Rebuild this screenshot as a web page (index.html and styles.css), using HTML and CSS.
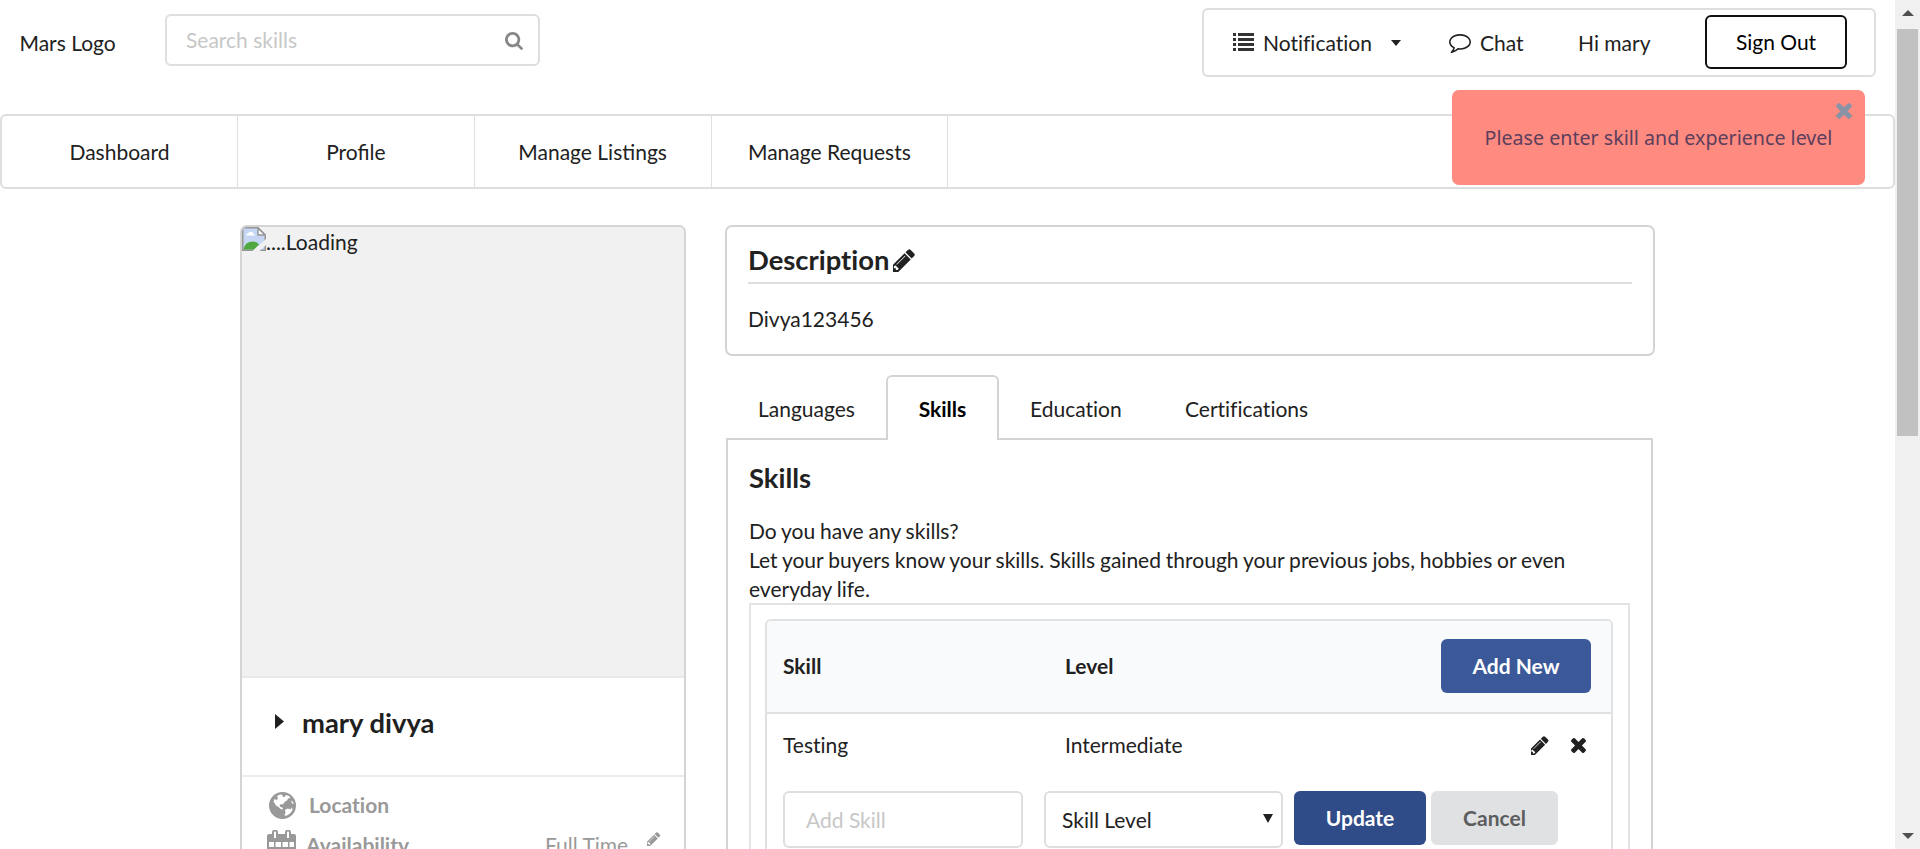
FILE: index.html
```
<!DOCTYPE html>
<html lang="en">
<head>
<meta charset="utf-8">
<title>Profile</title>
<link rel="stylesheet" href="styles.css">
</head>
<body>
<svg class="defs" aria-hidden="true">
  <symbol id="pencil" viewBox="256 128 1408 1536"><path d="M491 1536l91-91-235-235-91 91v107h128v128h107zm523-928q0-22-22-22-10 0-17 7l-542 542q-7 7-7 17 0 22 22 22 10 0 17-7l542-542q7-7 7-17zm-54-192l416 416-832 832h-416v-416zm683 96q0 53-37 90l-166 166-416-416 166-165q36-38 90-38 53 0 91 38l235 234q37 39 37 91z"/></symbol>
  <symbol id="times" viewBox="302 366 1188 1188"><path d="M1490 1322q0 40-28 68l-136 136q-28 28-68 28t-68-28l-294-294-294 294q-28 28-68 28t-68-28l-136-136q-28-28-28-68t28-68l294-294-294-294q-28-28-28-68t28-68l136-136q28-28 68-28t68 28l294 294 294-294q28-28 68-28t68 28l136 136q28 28 28 68t-28 68l-294 294 294 294q28 28 28 68z"/></symbol>
</svg>
<div class="window">
<div class="page">
  <header class="top">
    <span class="logo">Mars Logo</span>
    <div class="search"><span>Search skills</span>
      <svg viewBox="64 128 1664 1664"><path d="M1216 832q0-185-131.5-316.5t-316.5-131.5-316.5 131.5-131.5 316.5 131.5 316.5 316.5 131.5 316.5-131.5 131.5-316.5zm512 832q0 52-38 90t-90 38q-54 0-90-38l-343-342q-179 124-399 124-143 0-273.5-55.5t-225-150-150-225-55.5-273.5 55.5-273.5 150-225 225-150 273.5-55.5 273.5 55.5 225 150 150 225 55.5 273.5q0 220-124 399l343 343q37 37 37 90z"/></svg>
    </div>
    <div class="account">
      <svg class="i-list" viewBox="0 0 21 18"><path d="M0 0h3v3H0zM5 0h16v3H5zM0 5h3v3H0zM5 5h16v3H5zM0 10h3v3H0zM5 10h16v3H5zM0 15h3v3H0zM5 15h16v3H5z"/></svg>
      <span class="notif">Notification</span>
      <svg class="i-caret" viewBox="0 0 10 6"><path d="M0 0h10L5 6z"/></svg>
      <svg class="i-chat" viewBox="0 256 1792 1536"><path d="M896 384q-204 0-381.5 69.5t-282 187.5-104.5 255q0 112 71.5 213.5t201.5 175.5l87 50-27 96q-24 91-70 172 152-63 275-171l43-38 57 6q69 8 130 8 204 0 381.5-69.5t282-187.5 104.5-255-104.5-255-282-187.5-381.5-69.5zm896 512q0 174-120 321.500t-326 233-450 85.500q-70 0-145-8-198 175-460 242-49 14-114 22h-5q-15 0-27-10.500t-16-27.500v-1q-3-4-.5-12t2-10 4.500-9.500l6-9 7-8.500 8-9q7-8 31-34.500t34.500-38 31-39.500 32.500-51 27-59 26-76q-157-89-247.500-220t-90.500-281q0-174 120-321.500t326-233 450-85.500 450 85.500 326 233 120 321.500z"/></svg>
      <span class="chat">Chat</span>
      <span class="hi">Hi mary</span>
      <button class="signout">Sign Out</button>
    </div>
  </header>
  <nav class="menu"><a>Dashboard</a><a>Profile</a><a>Manage Listings</a><a>Manage Requests</a></nav>
  <main class="columns">
    <aside class="card">
      <div class="photo">
        <svg viewBox="0 0 24 24"><path d="M.75.75H16L23.25 8v15.25H.75z" fill="#c6d7f5" stroke="#969696" stroke-width="1.5"/><path d="M4 8.500q0-2 2.200-2 1-2.500 3.300-1.500 2 0 2 2 1.500.300 1.500 1.500z" fill="#fff"/><path d="M1.500 22.500q1.500-8 9.500-8 4 0 6 3l-5 5z" fill="#4fa83d"/><path d="M10.500 24L24 12v6l-6.500 6z" fill="#f1f1f1"/><path d="M16 1v7h7z" fill="#fff" stroke="#969696" stroke-width="1.500"/></svg><span>....Loading</span>
      </div>
      <div class="name"><svg viewBox="0 0 9 15"><path d="M0 0l9 7.500L0 15z"/></svg><h2>mary divya</h2></div>
      <div class="facts">
        <div class="fact loc">
          <svg viewBox="0 0 27 27"><circle cx="13.500" cy="13.500" r="13.500"/><path fill="#fff" d="M8 4l3-1.500 3 .5-1 1.500 2.500.5L17 3l3 1 1.500 2-2.500.5-1 2-2.500 1.500-1.500 2.500-2-.5-1.500 1.500 1 1.500 2 .5.5 2-2-.3-2.500-2.200-2.500-1.500L4.500 9.500 5.500 7l2 1 1.500-1.500zM16 18l2.500-1.500 3 .8 1.500-2 .5 3-2.500 3.200-4 2.500-1.500-1 1-2zM22 8.500l2 1.200.8 2.300-1.800-.8z"/></svg>
          <b>Location</b>
        </div>
        <div class="fact avail">
          <svg viewBox="0 0 29 32"><path fill-rule="evenodd" d="M2 4h3V2.500a3 3 0 0 1 6 0V4h7V2.500a3 3 0 0 1 6 0V4h3q2 0 2 2v24q0 2-2 2H2q-2 0-2-2V6q0-2 2-2zM7 2.500V8h2V2.500q0-1-1-1t-1 1zm13 0V8h2V2.500q0-1-1-1t-1 1zM2 12v5h5v-5zm6.500 0v5H14v-5zm7 0v5h5.500v-5zm7 0v5H27v-5z"/></svg>
          <b>Availability</b><span class="value">Full Time</span><svg class="edit"><use href="#pencil"/></svg>
        </div>
      </div>
    </aside>
    <section class="main">
      <div class="desc">
        <h3>Description<svg><use href="#pencil"/></svg></h3>
        <p>Divya123456</p>
      </div>
      <div class="tabs"><a class="t1">Languages</a><a class="active">Skills</a><a class="t3">Education</a><a class="t4">Certifications</a></div>
      <div class="panel">
        <h3>Skills</h3>
        <p>Do you have any skills?<br>Let your buyers know your skills. Skills gained through your previous jobs, hobbies or even<br>everyday life.</p>
        <div class="frame">
          <div class="table">
            <div class="row head"><b>Skill</b><b>Level</b><button class="btn add">Add New</button></div>
            <div class="row"><span>Testing</span><span>Intermediate</span><span class="acts"><svg class="p"><use href="#pencil"/></svg><svg class="x"><use href="#times"/></svg></span></div>
            <div class="form">
              <div class="input">Add Skill</div>
              <div class="select">Skill Level<svg viewBox="0 0 10 9"><path d="M0 0h10L5 9z"/></svg></div>
              <button class="btn update">Update</button><button class="btn cancel">Cancel</button>
            </div>
          </div>
        </div>
      </div>
    </section>
  </main>
</div>
<div class="scrollbar"><svg viewBox="0 0 12 6"><path d="M0 6h12L6 0z"/></svg><div class="thumb"></div><svg class="down" viewBox="0 0 12 6"><path d="M0 0h12L6 6z"/></svg></div>
</div>
<div class="toast"><svg><use href="#times"/></svg>Please enter skill and experience level</div>
</body>
</html>
```
FILE: styles.css
```
* { box-sizing: border-box; }
body { margin: 0; height: 849px; overflow: hidden; background: #fff; color: #212121; font: 21px/30px Lato, "Open Sans", sans-serif; white-space: nowrap; }
h2, h3, p { margin: 0; }
h2, h3 { font-size: 27.400px; line-height: 35px; font-weight: 700; }
svg { display: block; flex: none; fill: currentColor; }
button { font: inherit; padding: 0; cursor: pointer; }
.defs { position: absolute; width: 0; height: 0; }
.window { display: flex; height: 849px; overflow: hidden; }
.page { width: 1895px; flex: none; }
.notif, .desc h3, .tabs, .row, .loc { font-variant-ligatures: none; }

.top { display: flex; align-items: flex-start; height: 114px; }
.logo { width: 165px; padding: 28px 0 0 19.500px; }
.search { display: flex; align-items: center; justify-content: space-between; width: 375px; height: 52px; margin-top: 14px; padding: 0 15px 0 19px; border: 2px solid #dededf; border-radius: 6px; color: #c7c7c7; }
.search span { margin-top: -1px; }
.search svg { width: 18px; height: 18px; margin-top: 2px; color: #888; }
.account { display: flex; align-items: center; width: 674px; height: 69px; margin: 8px 0 0 662px; padding-left: 29px; border: 2px solid #dededf; border-radius: 6px; }
.i-list { width: 21px; height: 18px; margin: -2px 9px 0 0; color: #333; }
.notif { width: 128px; }
.i-caret { width: 10px; height: 6px; margin-right: 48px; }
.i-chat { width: 22px; height: 19px; margin: 2px 9px 0 0; }
.chat { width: 98px; }
.hi { width: 127px; }
.signout { width: 142px; height: 54px; margin-top: -2px; padding-top: 1px; border: 2px solid #111; border-radius: 6px; background: #fff; color: #000; }

.menu { display: flex; height: 75px; border: 2px solid #dededf; border-radius: 6px; }
.menu a { display: flex; align-items: center; justify-content: center; width: 236.750px; border-right: 1.500px solid #e0e0e1; }
.menu a:first-child { width: 236px; }

.columns { display: flex; align-items: flex-start; padding: 36px 0 0 240px; }
.card { width: 446px; height: 700px; border: 2px solid #d4d4d5; border-radius: 7px; overflow: hidden; }
.photo { display: flex; align-items: flex-start; height: 451px; background: #f1f1f1; border-bottom: 2px solid #e9e9e9; }
.photo svg { width: 24px; height: 24px; }
.name { display: flex; align-items: flex-start; height: 99px; padding: 27px 0 0 32px; border-bottom: 2px solid #ececec; color: #1f1f1f; }
.name svg { width: 9px; height: 15px; margin: 9px 18px 0 1px; }
.facts { padding: 15px 0 0 25px; color: #999; }
.fact { display: flex; align-items: flex-start; height: 38px; }
.loc svg { width: 27px; height: 27px; margin: 0 13px 0 2px; }
.loc b { margin-top: -2px; }
.avail > svg:first-child { width: 29px; height: 32px; margin-right: 10px; }
.avail b { width: 239px; }
.avail .value { width: 102px; }
.avail .edit { width: 14px; height: 14px; margin-top: 2px; }

.main { width: 930px; margin-left: 39px; }
.desc { height: 131px; padding: 15px 21px 0; border: 2px solid #d4d4d5; border-radius: 7px; }
.desc h3 { display: flex; height: 42px; border-bottom: 2px solid #dededf; }
.desc h3 svg { width: 23px; height: 23px; margin: 7px 0 0 4px; }
.desc p { margin-top: 20px; }
.tabs { display: flex; height: 65px; margin: 19px 0 0 1px; position: relative; }
.tabs a { display: flex; align-items: center; padding-top: 2px; }
.tabs .t1 { width: 160px; padding-left: 32px; }
.tabs .active { justify-content: center; width: 113px; padding-top: 0; border: 2px solid #d4d4d5; border-bottom: 0; border-radius: 6px 6px 0 0; background: #fff; color: #000; font-weight: 700; }
.tabs .t3 { width: 155px; padding-left: 31px; }
.tabs .t4 { padding-left: 31px; }
.panel { width: 927px; height: 430px; margin: -2px 0 0 1px; padding: 19px 20px 0 21px; border: 2px solid #d4d4d5; }
.panel h3 { line-height: 37px; }
.panel p { margin-top: 20px; line-height: 29px; word-spacing: -.5px; }
.frame { height: 300px; padding: 14px; border: 2px solid #e2e3e4; width: 881px; }
.table { width: 848px; height: 300px; border: 2px solid #e0e1e2; border-radius: 6px 6px 0 0; overflow: hidden; }
.row { display: grid; grid-template-columns: 282px 1fr auto; align-items: center; height: 64px; padding: 0 20px 2px 16px; }
.head { height: 93px; padding-bottom: 0; background: #f9fafb; border-bottom: 2px solid #e0e1e2; }
.head b { padding-bottom: 1px; }
.btn { height: 54px; border: 0; border-radius: 6px; font-weight: 700; color: #fff; }
.add { width: 150px; margin-bottom: 1px; background: #3b5998; }
.acts { display: flex; align-items: center; margin-right: 5px; }
.acts .p { width: 18px; height: 19px; margin-right: 22px; }
.acts .x { width: 15px; height: 15px; }
.form { display: flex; padding: 13px 0 0 16px; }
.input, .select { display: flex; align-items: center; width: 240px; height: 57px; border: 2px solid #dededf; border-radius: 6px; }
.input { padding-left: 21px; color: #c7c7c7; }
.select { justify-content: space-between; width: 239px; margin: 0 11px 0 21px; padding: 0 8px 0 16px; }
.select svg { width: 10px; height: 9px; margin-bottom: 2px; }
.update { width: 132px; background: #2f4b88; }
.cancel { width: 127px; margin-left: 5px; background: #e0e1e2; color: #5c5d5e; }

.scrollbar { display: flex; flex-direction: column; align-items: center; width: 25px; height: 849px; padding: 10px 0; background: #f0f0f0; color: #505050; }
.scrollbar svg { width: 12px; height: 6px; }
.thumb { width: 21px; height: 407px; margin-top: 13px; background: #c1c1c1; }
.scrollbar .down { margin-top: auto; }

.toast { position: absolute; left: 1452px; top: 90px; display: flex; align-items: center; justify-content: center; width: 413px; height: 95px; padding-top: 1px; border-radius: 7px; background: #ff8a80; color: #5b3f5c; font-family: "Noto Sans", sans-serif; font-size: 19.650px; }
.toast svg { position: absolute; right: 13px; top: 13px; width: 16px; height: 16px; color: #8a93a5; }
```
